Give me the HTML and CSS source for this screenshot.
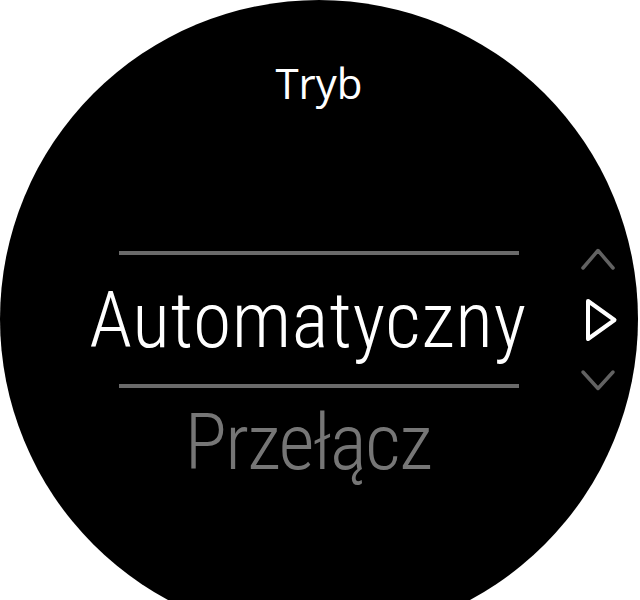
FILE: index.html
```html
<!DOCTYPE html>
<html lang="pl">
<head>
    <meta charset="UTF-8">
    <meta name="viewport" content="width=device-width, initial-scale=1.0">
    <title>Tryb</title>
    <link rel="stylesheet" href="styles.css">
</head>
<body>
    <div class="watch">
        <div class="title">Tryb</div>

        <div class="picker">
            <div class="selected">
                <span class="option">Automatyczny</span>
            </div>

            <!-- scroll hint: up / select / down -->
            <svg class="scroll" width="40" height="150" viewBox="0 0 40 150">
                <polyline points="5,23 20,5.5 35,23" fill="none" stroke="#626262" stroke-width="3.5" stroke-linecap="round" stroke-linejoin="round"/>
                <polygon points="10,56 36.5,75 10,94" fill="none" stroke="#fff" stroke-width="4" stroke-linejoin="round"/>
                <polyline points="5,127 20,143.5 35,127" fill="none" stroke="#626262" stroke-width="3.5" stroke-linecap="round" stroke-linejoin="round"/>
            </svg>

            <div class="next">
                <span class="option">Przełącz</span>
            </div>
        </div>
    </div>
</body>
</html>
```

FILE: styles.css
```css
html, body {
    margin: 0;
    height: 600px;
    overflow: hidden;
    background: #fff;
}

/* round display, cut off by the bottom of the frame */
.watch {
    width: 638px;
    height: 600px;
    clip-path: circle(319px at 319px 319px);
    background: #000;
    padding-top: 62px;
    box-sizing: border-box;
}

.title {
    font-family: "Open Sans", sans-serif;
    font-size: 42px;
    line-height: 42px;
    color: #fff;
    text-align: center;
    margin-bottom: 147px;
}

.picker {
    display: grid;
    grid-template-columns: 1fr 400px 1fr;
    align-items: start;
}

.selected {
    grid-column: 2;
    grid-row: 1;
    display: flex;
    justify-content: center;
    border-top: 4px solid #6a6a6a;
    border-bottom: 4px solid #6a6a6a;
    padding: 27px 0 24px;
    color: #fff;
}

.next {
    grid-column: 2;
    grid-row: 2;
    display: flex;
    justify-content: center;
    margin-top: 16px;
    color: #767676;
}

.option {
    font-family: "Roboto Condensed", sans-serif;
    font-weight: 300;
    font-size: 78px;
    line-height: 78px;
    white-space: nowrap;
    margin-right: 22px;
}

.selected .option {
    letter-spacing: 0.6px;
}

.next .option {
    letter-spacing: -1.5px;
}

.scroll {
    grid-column: 3;
    grid-row: 1;
    align-self: center;
    justify-self: end;
    margin: -7px 20px -7px 0;
}
```
